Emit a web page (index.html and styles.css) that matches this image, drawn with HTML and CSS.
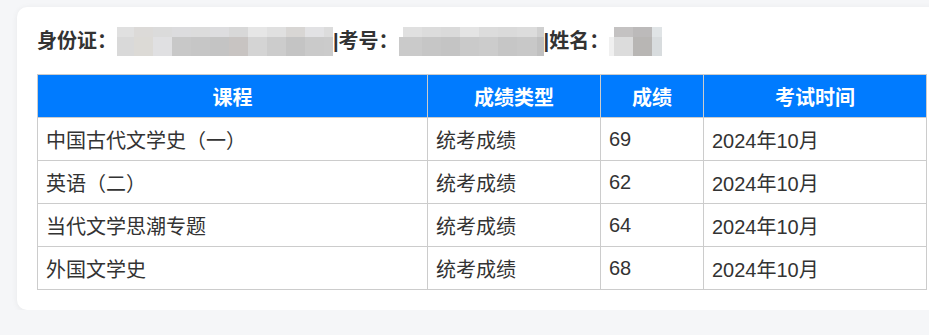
FILE: index.html
```html
<!DOCTYPE html>
<html lang="zh-CN">
<head>
<meta charset="utf-8">
<title>成绩查询</title>
<link rel="stylesheet" href="styles.css">
</head>
<body>
<div class="page">
  <div class="card">
    <div class="info">
      <span class="label">身份证：</span><span class="blur blur-id"><span class="row top"></span><span class="row bottom"></span></span><span class="label">|考号：</span><span class="blur blur-no"><span class="row top"></span><span class="row bottom"></span></span><span class="label">|姓名：</span><span class="blur blur-name"><span class="row top"></span><span class="row bottom"></span></span>
    </div>
    <table class="scores">
      <colgroup>
        <col class="c-course">
        <col class="c-type">
        <col class="c-score">
        <col class="c-time">
      </colgroup>
      <thead>
        <tr><th>课程</th><th>成绩类型</th><th>成绩</th><th>考试时间</th></tr>
      </thead>
      <tbody>
        <tr><td>中国古代文学史（一）</td><td>统考成绩</td><td>69</td><td>2024年10月</td></tr>
        <tr><td>英语（二）</td><td>统考成绩</td><td>62</td><td>2024年10月</td></tr>
        <tr><td>当代文学思潮专题</td><td>统考成绩</td><td>64</td><td>2024年10月</td></tr>
        <tr><td>外国文学史</td><td>统考成绩</td><td>68</td><td>2024年10月</td></tr>
      </tbody>
    </table>
  </div>
</div>
</body>
</html>
```

FILE: styles.css
```css
html, body {
  margin: 0;
  padding: 0;
  background: #f5f6f8;
  overflow: hidden;
}

body {
  font-family: "Liberation Sans", "Noto Sans CJK SC", sans-serif;
  color: #333;
}

.page {
  padding: 7px 0 0 17px;
}

.card {
  width: 889px;
  padding: 20px;
  background: #fff;
  border-radius: 10px;
  box-shadow: 0 1px 6px rgba(0, 0, 0, 0.06);
}

.info {
  display: flex;
  align-items: center;
  height: 29px;
  margin-bottom: 18px;
  white-space: nowrap;
}

.label {
  font-size: 20px;
  font-weight: bold;
  color: #333;
  line-height: 29px;
}

.blur {
  display: flex;
  flex-direction: column;
  height: 29px;
}

.blur .row.top { height: 10px; }
.blur .row.bottom { height: 19px; }

.blur-id { width: 216px; }
.blur-id .top {
  background: linear-gradient(to right,
    #e0e0e0 0 17px, #dcdad8 17px 36px, #dbdbdb 36px 55px, #dcdcde 55px 74px,
    #dcdcdc 74px 93px, #dddddf 93px 112px, #d8d8d8 112px 131px, #e6e6e6 131px 150px,
    #e0e0e0 150px 169px, #d8d6d4 169px 188px, #e2e2e4 188px 207px, #dcdcdc 207px 216px);
}
.blur-id .bottom {
  background: linear-gradient(to right,
    #d9d9d9 0 17px, #dcdad6 17px 36px, #e0e0e2 36px 55px, #c8c8c8 55px 74px,
    #c6c6c6 74px 93px, #c4c4c4 93px 112px, #c8c4c2 112px 131px, #d4d4d4 131px 150px,
    #cccccc 150px 169px, #c4c4c4 169px 188px, #cacaca 188px 207px, #cbcbcb 207px 216px);
}

.blur-no { width: 145px; }
.blur-no .top {
  background: linear-gradient(to right,
    #ffffff 0 4px, #e0e0e0 4px 23px, #dcdcdc 23px 42px, #dadada 42px 61px,
    #e4e4e4 61px 80px, #dcdcdc 80px 99px, #dadada 99px 118px, #dcdcdc 118px 138px,
    #d0d0d0 138px 145px);
}
.blur-no .bottom {
  background: linear-gradient(to right,
    #cacaca 0 23px, #c6c6c6 23px 42px, #c4c4c4 42px 61px, #cacaca 61px 80px,
    #cccccc 80px 99px, #c6c6c6 99px 118px, #c8c8c8 118px 138px, #c0c0c0 138px 145px);
}

.blur-name { width: 53px; }
.blur-name .top {
  background: linear-gradient(to right,
    #ffffff 0 5px, #c4c2c2 5px 24px, #bcbaba 24px 43px, #e0e4e6 43px 53px);
}
.blur-name .bottom {
  background: linear-gradient(to right,
    #f0f0f0 0 5px, #dcdcdc 5px 24px, #b8b6b4 24px 43px, #d8dcde 43px 53px);
}

.scores {
  width: 889px;
  border-collapse: collapse;
  table-layout: fixed;
  font-size: 20px;
}

.c-course { width: 390px; }
.c-type { width: 173px; }
.c-score { width: 103px; }
.c-time { width: 223px; }

.scores th,
.scores td {
  border: 1px solid #ccc;
  height: 43px;
  padding: 0 8px;
  box-sizing: border-box;
}

.scores th {
  background: #007bff;
  color: #fff;
  font-weight: bold;
  text-align: center;
}

.scores td {
  text-align: left;
  color: #333;
}
```
